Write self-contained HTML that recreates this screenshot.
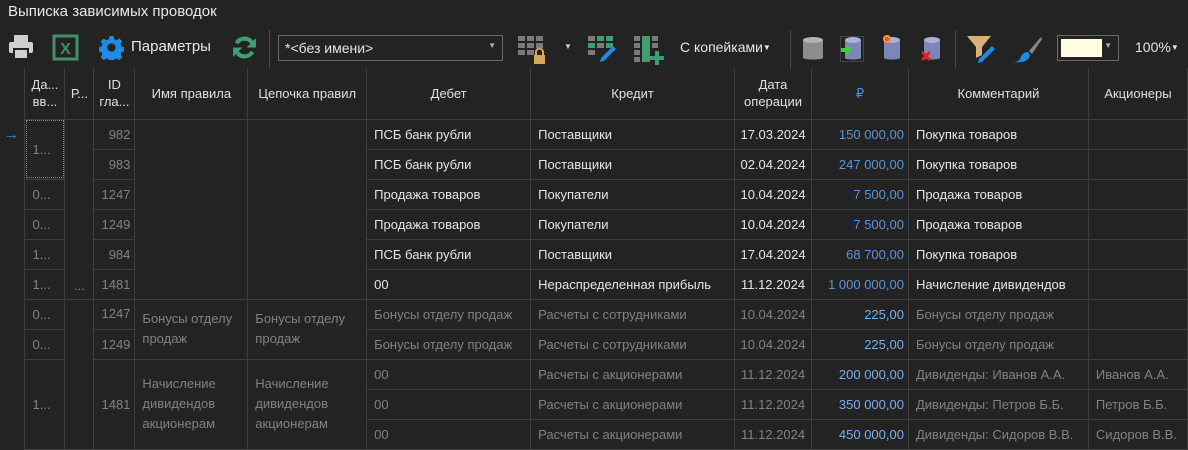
<!DOCTYPE html>
<html><head><meta charset="utf-8"><style>
*{margin:0;padding:0;box-sizing:border-box}
body{width:1188px;height:448px;background:#232323;font-family:"Liberation Sans","DejaVu Sans",sans-serif;color:#e6e6e6;overflow:hidden;position:relative}
.t{position:absolute;left:8px;top:3px;font-size:15px;color:#e8e8e8}
.a{position:absolute}
.sep{position:absolute;top:30px;width:1px;height:38px;background:#4a4a4a}
table{position:absolute;left:0;top:68px;border-collapse:collapse;table-layout:fixed;font-size:13px}
td,th{border:1px solid #3e3e3e;height:30px;padding:0 4px 0 7px;white-space:nowrap;overflow:hidden;font-weight:normal}
th{height:51px;border-top:none;color:#e0e0e0;text-align:center;line-height:17px;white-space:normal;padding:0 3px}
.g{color:#828282}
.n{text-align:right;color:#5b95d6}
.n2{text-align:right;color:#7aaef0}
.d{text-align:center;padding:0 4px}
.w{white-space:normal;line-height:20px}
.i{border:none;border-right:1px solid #3e3e3e}
</style></head><body>
<div class="t">Выписка зависимых проводок</div>
<svg class="a" style="left:8px;top:34px" width="26" height="26" viewBox="0 0 26 26"><rect x="6" y="1" width="14" height="7" fill="#cfcfcf"/><rect x="1" y="8" width="24" height="11" rx="2" fill="#cfcfcf"/><rect x="6" y="15" width="14" height="10" fill="#cfcfcf" stroke="#232323" stroke-width="2"/></svg>
<svg class="a" style="left:52px;top:34px" width="27" height="27" viewBox="0 0 27 27"><rect x="2" y="2" width="23" height="23" fill="none" stroke="#3f8f6a" stroke-width="3"/><text x="13.5" y="20" font-size="16" font-weight="bold" fill="#3f8f6a" text-anchor="middle" font-family="Liberation Sans">X</text></svg>
<svg class="a" style="left:99px;top:35px" width="25" height="25" viewBox="0 0 24 24"><path fill="#1e8ce6" d="M10 1h4l.6 3 2.4 1 2.6-1.7 2.8 2.8L20.7 8.7l1 2.4 3 .6v4l-3 .6-1 2.4 1.7 2.6-2.8 2.8-2.6-1.7-2.4 1-.6 3h-4l-.6-3-2.4-1-2.6 1.7-2.8-2.8 1.7-2.6-1-2.4-3-.6v-4l3-.6 1-2.4L1.7 6.1l2.8-2.8L7.1 5l2.4-1z"/><circle cx="12" cy="12" r="4" fill="#232323"/></svg>
<div class="a" style="left:131px;top:38px;font-size:15px;color:#e6e6e6">Параметры</div>
<svg class="a" style="left:232px;top:35px" width="25" height="25" viewBox="0 0 24 24"><path d="M20 9A8.5 8.5 0 0 0 4.5 8" fill="none" stroke="#3f9f72" stroke-width="4"/><path d="M4 15a8.5 8.5 0 0 0 15.5 1" fill="none" stroke="#3f9f72" stroke-width="4"/><path d="M23 3v9h-9z" fill="#3f9f72"/><path d="M1 21v-9h9z" fill="#3f9f72"/></svg>
<div class="sep" style="left:269px"></div>
<div class="a" style="left:278px;top:35px;width:225px;height:26px;border:1px solid #6a6a6a;font-size:14px;padding:4px 6px;color:#e6e6e6">*&lt;без имени&gt;<span style="position:absolute;right:6px;top:5px;font-size:8px;color:#aaa">▼</span></div>
<svg class="a" style="left:517px;top:35px" width="30" height="30" viewBox="0 0 30 30"><g fill="#7a7a7a"><rect x="1" y="1" width="7" height="5"/><rect x="10" y="1" width="7" height="5"/><rect x="19" y="1" width="7" height="5"/><rect x="1" y="8" width="7" height="5"/><rect x="10" y="8" width="7" height="5"/><rect x="19" y="8" width="7" height="5"/><rect x="1" y="15" width="7" height="5"/><rect x="10" y="15" width="7" height="5"/></g><rect x="17" y="20" width="11" height="9" fill="#d6a85a"/><path d="M19 20v-3a3.5 3.5 0 0 1 7 0v3" fill="none" stroke="#d6a85a" stroke-width="2"/></svg>
<div class="a" style="left:564px;top:42px;font-size:8px;color:#ccc">▼</div>
<svg class="a" style="left:587px;top:35px" width="30" height="30" viewBox="0 0 30 30"><g fill="#7a7a7a"><rect x="1" y="1" width="7" height="5"/><rect x="10" y="8" width="7" height="5"/><rect x="1" y="15" width="7" height="5"/></g><g fill="#3f9f72"><rect x="10" y="1" width="7" height="5"/><rect x="19" y="1" width="7" height="5"/><rect x="1" y="8" width="7" height="5"/><rect x="19" y="8" width="7" height="5"/></g><path d="M26 11l3 3-12 12-4 1 1-4z" fill="#1e8ce6"/></svg>
<svg class="a" style="left:633px;top:35px" width="32" height="32" viewBox="0 0 32 32"><g fill="#7a7a7a"><rect x="1" y="1" width="6" height="5"/><rect x="1" y="8" width="6" height="5"/><rect x="1" y="15" width="6" height="5"/><rect x="1" y="22" width="6" height="5"/><rect x="19" y="1" width="6" height="5"/><rect x="19" y="8" width="6" height="5"/></g><rect x="9" y="1" width="8" height="26" fill="#3f9f72"/><path d="M22 16h4v5h5v4h-5v5h-4v-5h-5v-4h5z" fill="#3f9f72"/></svg>
<div class="a" style="left:680px;top:39px;font-size:14px">С копейками<span style="font-size:8px;position:relative;top:-2px">▼</span></div>
<div class="sep" style="left:790px"></div>
<svg class="a" style="left:801px;top:36px" width="24" height="26" viewBox="0 0 24 26"><path d="M2 4v18c0 2 20 2 20 0V4" fill="#8d8d8d"/><ellipse cx="12" cy="4" rx="10" ry="3" fill="#b3b3b3"/></svg>
<svg class="a" style="left:840px;top:36px" width="24" height="26" viewBox="0 0 24 26"><rect x="0.5" y="0.5" width="23" height="25" fill="none" stroke="#666" stroke-dasharray="1 1"/><path d="M5 4v18c0 2 16 2 16 0V4" fill="#7c86b8"/><ellipse cx="13" cy="4" rx="8" ry="3" fill="#aab2d8"/><path d="M1 12h5v-3l6 5-6 5v-3H1z" fill="#3ecf3e"/></svg>
<svg class="a" style="left:880px;top:34px" width="24" height="28" viewBox="0 0 24 28"><path d="M4 6v18c0 2 16 2 16 0V6" fill="#7c86b8"/><ellipse cx="12" cy="6" rx="8" ry="3" fill="#aab2d8"/><circle cx="7" cy="5" r="4" fill="#f0a020"/><circle cx="7" cy="5" r="2" fill="#ff4040"/></svg>
<svg class="a" style="left:920px;top:36px" width="24" height="26" viewBox="0 0 24 26"><path d="M4 4v18c0 2 16 2 16 0V4" fill="#7c86b8"/><ellipse cx="12" cy="4" rx="8" ry="3" fill="#aab2d8"/><path d="M2 16l8 8M10 16l-8 8" stroke="#e02020" stroke-width="3"/></svg>
<div class="sep" style="left:955px"></div>
<svg class="a" style="left:966px;top:34px" width="30" height="30" viewBox="0 0 30 30"><path d="M1 2h24l-9 11v8l-6 3V13z" fill="#d8b07a"/><path d="M26 12l3 3-13 13-4 1 1-4z" fill="#1e8ce6"/></svg>
<svg class="a" style="left:1013px;top:36px" width="30" height="28" viewBox="0 0 30 28"><path d="M28 1l-12 14 3 3L29 3z" fill="#888"/><path d="M15 16c-5 0-7 4-8 7-1 2-4 3-6 3 6 1 15 0 16-7z" fill="#1e8ce6"/></svg>
<div class="a" style="left:1057px;top:35px;width:62px;height:26px;border:1px solid #6a6a6a"><div style="position:absolute;left:3px;top:3px;width:41px;height:18px;background:#fffde0"></div><span style="position:absolute;right:6px;top:5px;font-size:8px;color:#aaa">▼</span></div>
<div class="a" style="left:1135px;top:39px;font-size:14px">100%<span style="font-size:8px;position:relative;top:-2px">▼</span></div>

<table>
<colgroup><col style="width:25px"><col style="width:40px"><col style="width:29px"><col style="width:41px"><col style="width:113px"><col style="width:119px"><col style="width:164px"><col style="width:204px"><col style="width:77px"><col style="width:97px"><col style="width:180px"><col style="width:99px"></colgroup>
<tr><th class="i"></th><th>Да...<br>вв...</th><th>Р...</th><th>ID<br>гла...</th><th>Имя правила</th><th>Цепочка правил</th><th>Дебет</th><th>Кредит</th><th>Дата<br>операции</th><th style="color:#4a8fdc">₽</th><th>Комментарий</th><th>Акционеры</th></tr>
<tr><td class="i" style="color:#2f8fe0;font-size:15px;padding:0 4px">→</td><td rowspan="2" class="g" style="outline:1px dotted #888;outline-offset:-2px">1...</td><td rowspan="6" class="g" style="vertical-align:bottom;padding:0 0 6px;text-align:center">...</td><td class="g" style="text-align:right">982</td><td rowspan="6"></td><td rowspan="6"></td><td>ПСБ банк рубли</td><td>Поставщики</td><td class="d">17.03.2024</td><td class="n">150 000,00</td><td>Покупка товаров</td><td></td></tr>
<tr><td class="i"></td><td class="g" style="text-align:right">983</td><td>ПСБ банк рубли</td><td>Поставщики</td><td class="d">02.04.2024</td><td class="n">247 000,00</td><td>Покупка товаров</td><td></td></tr>
<tr><td class="i"></td><td class="g">0...</td><td class="g" style="text-align:right">1247</td><td>Продажа товаров</td><td>Покупатели</td><td class="d">10.04.2024</td><td class="n">7 500,00</td><td>Продажа товаров</td><td></td></tr>
<tr><td class="i"></td><td class="g">0...</td><td class="g" style="text-align:right">1249</td><td>Продажа товаров</td><td>Покупатели</td><td class="d">10.04.2024</td><td class="n">7 500,00</td><td>Продажа товаров</td><td></td></tr>
<tr><td class="i"></td><td class="g">1...</td><td class="g" style="text-align:right">984</td><td>ПСБ банк рубли</td><td>Поставщики</td><td class="d">17.04.2024</td><td class="n">68 700,00</td><td>Покупка товаров</td><td></td></tr>
<tr><td class="i"></td><td class="g">1...</td><td class="g" style="text-align:right">1481</td><td>00</td><td>Нераспределенная прибыль</td><td class="d">11.12.2024</td><td class="n">1 000 000,00</td><td>Начисление дивидендов</td><td></td></tr>
<tr class="g"><td class="i"></td><td>0...</td><td rowspan="5"></td><td style="text-align:right;vertical-align:top;padding-top:6px">1247</td><td rowspan="2" class="w">Бонусы отделу<br>продаж</td><td rowspan="2" class="w">Бонусы отделу<br>продаж</td><td>Бонусы отделу продаж</td><td>Расчеты с сотрудниками</td><td class="d">10.04.2024</td><td class="n2">225,00</td><td>Бонусы отделу продаж</td><td></td></tr>
<tr class="g"><td class="i"></td><td>0...</td><td style="text-align:right">1249</td><td>Бонусы отделу продаж</td><td>Расчеты с сотрудниками</td><td class="d">10.04.2024</td><td class="n2">225,00</td><td>Бонусы отделу продаж</td><td></td></tr>
<tr class="g"><td class="i"></td><td rowspan="3">1...</td><td rowspan="3" style="text-align:right">1481</td><td rowspan="3" class="w">Начисление<br>дивидендов<br>акционерам</td><td rowspan="3" class="w">Начисление<br>дивидендов<br>акционерам</td><td>00</td><td>Расчеты с акционерами</td><td class="d">11.12.2024</td><td class="n2">200 000,00</td><td>Дивиденды: Иванов А.А.</td><td>Иванов А.А.</td></tr>
<tr class="g"><td class="i"></td><td>00</td><td>Расчеты с акционерами</td><td class="d">11.12.2024</td><td class="n2">350 000,00</td><td>Дивиденды: Петров Б.Б.</td><td>Петров Б.Б.</td></tr>
<tr class="g"><td class="i"></td><td>00</td><td>Расчеты с акционерами</td><td class="d">11.12.2024</td><td class="n2">450 000,00</td><td>Дивиденды: Сидоров В.В.</td><td>Сидоров В.В.</td></tr>
</table>
</body></html>
